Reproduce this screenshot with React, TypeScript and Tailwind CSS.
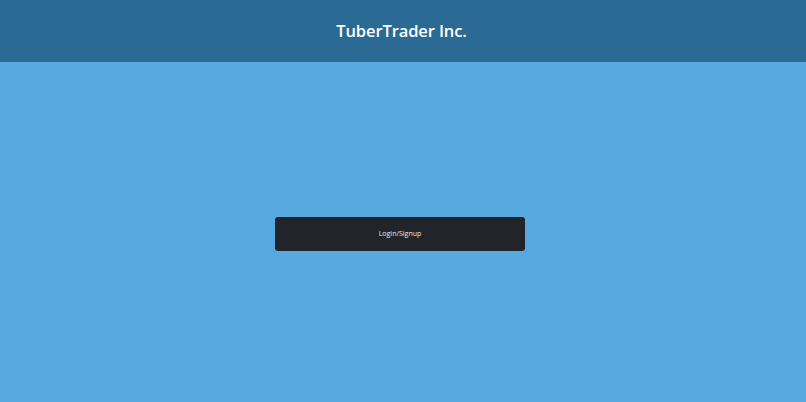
import React from 'react';

const App: React.FC = () => {
  return (
    <div className="flex flex-col h-screen w-full bg-[#57a9df] font-['Open_Sans',sans-serif]">
      <header className="h-[62px] bg-[#2b6a94] flex items-center justify-center shrink-0">
        <h1 className="text-white text-[16.5px] font-semibold tracking-[-0.1px] pr-[3px]">TuberTrader Inc.</h1>
      </header>

      <main className="flex-1 flex items-center justify-center">
        <button className="w-[250px] h-[34px] bg-[#212529] rounded-[3px] text-[#e8e8e8] text-[7px] mt-[4px] mr-[6px] pt-[1px]">
          Login/Signup
        </button>
      </main>
    </div>
  );
};

export default App;
